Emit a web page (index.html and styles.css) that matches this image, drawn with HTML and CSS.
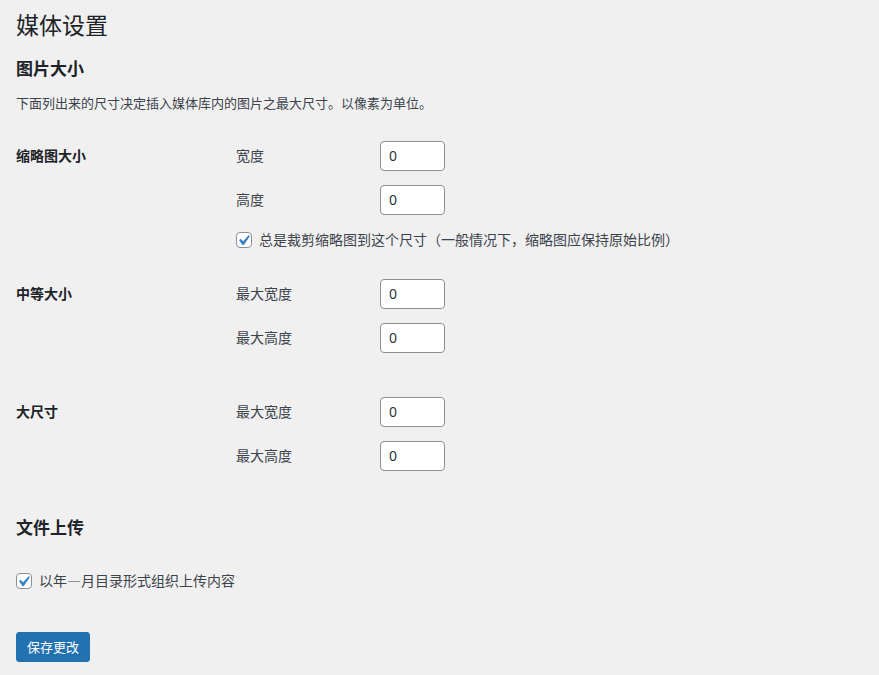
FILE: index.html
```html
<!DOCTYPE html>
<html lang="zh-CN">
<head>
<meta charset="utf-8">
<title>媒体设置</title>
<link rel="stylesheet" href="styles.css">
</head>
<body>
<div class="wrap">
  <h1 class="page-title">媒体设置</h1>

  <h2 class="section-title first">图片大小</h2>
  <p class="intro">下面列出来的尺寸决定插入媒体库内的图片之最大尺寸。以像素为单位。</p>

  <div class="form-row row-thumb">
    <div class="row-head">缩略图大小</div>
    <div class="row-body">
      <div class="field"><span class="field-label">宽度</span><span class="text-input">0</span></div>
      <div class="field"><span class="field-label">高度</span><span class="text-input">0</span></div>
      <div class="check-line">
        <span class="checkbox"><svg viewBox="0 0 20 20" width="21" height="21"><path d="M14.83 4.89l1.34.94-5.81 8.38H9.02L5.78 9.67l1.34-1.25 2.57 2.4z" fill="#3582c4"/></svg></span>
        <span class="check-text">总是裁剪缩略图到这个尺寸（一般情况下，缩略图应保持原始比例）</span>
      </div>
    </div>
  </div>

  <div class="form-row row-medium">
    <div class="row-head">中等大小</div>
    <div class="row-body">
      <div class="field"><span class="field-label">最大宽度</span><span class="text-input">0</span></div>
      <div class="field"><span class="field-label">最大高度</span><span class="text-input">0</span></div>
    </div>
  </div>

  <div class="form-row row-large">
    <div class="row-head">大尺寸</div>
    <div class="row-body">
      <div class="field"><span class="field-label">最大宽度</span><span class="text-input">0</span></div>
      <div class="field"><span class="field-label">最大高度</span><span class="text-input">0</span></div>
    </div>
  </div>

  <h2 class="section-title uploads">文件上传</h2>
  <div class="check-line uploads-check">
    <span class="checkbox"><svg viewBox="0 0 20 20" width="21" height="21"><path d="M14.83 4.89l1.34.94-5.81 8.38H9.02L5.78 9.67l1.34-1.25 2.57 2.4z" fill="#3582c4"/></svg></span>
    <span class="check-text">以年—月目录形式组织上传内容</span>
  </div>

  <div class="submit-row"><button class="button-primary" type="button">保存更改</button></div>
</div>
</body>
</html>
```

FILE: styles.css
```css
html, body {
  margin: 0;
  padding: 0;
}
body {
  background: #f0f0f1;
  color: #3c434a;
  font-family: "Segoe UI", "Noto Sans CJK SC", "Noto Sans", sans-serif;
  font-size: 13px;
  line-height: 1.4;
  width: 879px;
  height: 675px;
  overflow: hidden;
}
.wrap {
  padding: 9px 0 0 16px;
}
.page-title {
  margin: 0;
  font-size: 23px;
  font-weight: 400;
  line-height: 30px;
  color: #1d2327;
}
.section-title {
  margin: 0;
  font-size: 17px;
  font-weight: 700;
  line-height: 22px;
  color: #1d2327;
}
.section-title.first {
  margin-top: 18px;
}
.intro {
  margin: 14px 0 0;
  font-size: 13px;
  line-height: 20px;
  color: #3c434a;
}
.form-row {
  display: grid;
  grid-template-columns: 220px 1fr;
}
.row-thumb {
  margin-top: 13px;
}
.row-head {
  padding-top: 20px;
  font-size: 14px;
  font-weight: 700;
  line-height: 18px;
  color: #1d2327;
}
.row-body {
  padding: 15px 0;
  display: flex;
  flex-direction: column;
  gap: 14px;
}
.row-medium .row-body {
  padding-bottom: 29px;
}
.field {
  display: flex;
  align-items: center;
  height: 30px;
}
.field-label {
  width: 144px;
  font-size: 14px;
  color: #3c434a;
}
.text-input {
  box-sizing: border-box;
  width: 65px;
  height: 30px;
  padding: 0 8px;
  background: #fff;
  border: 1px solid #8c8f94;
  border-radius: 4px;
  font-family: "Segoe UI", "Noto Sans", sans-serif;
  font-size: 14px;
  line-height: 28px;
  color: #2c3338;
}
.check-line {
  display: flex;
  align-items: center;
  height: 18px;
  gap: 7px;
}
.row-thumb .check-line {
  margin-top: 2px;
}
.checkbox {
  box-sizing: border-box;
  width: 16px;
  height: 16px;
  background: #fff;
  border: 1px solid #8c8f94;
  border-radius: 4px;
  position: relative;
  flex: none;
}
.checkbox svg {
  position: absolute;
  left: -4px;
  top: -3px;
}
.check-text {
  font-size: 14px;
  color: #3c434a;
}
.section-title.uploads {
  margin-top: 30px;
}
.uploads-check {
  margin-top: 34px;
}
.submit-row {
  margin-top: 42px;
}
.button-primary {
  box-sizing: border-box;
  height: 30px;
  padding: 0 10px;
  background: #2271b1;
  border: 1px solid #2271b1;
  border-radius: 3px;
  color: #fff;
  font-family: "Segoe UI", "Noto Sans CJK SC", sans-serif;
  font-size: 13px;
  line-height: 28px;
}
```
